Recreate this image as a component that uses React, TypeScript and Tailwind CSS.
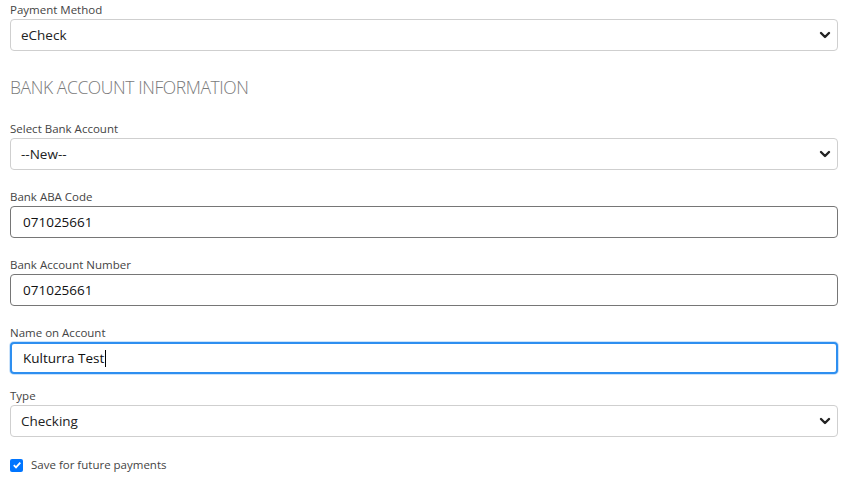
import React from "react";

const font = { fontFamily: '"Open Sans", "Segoe UI", sans-serif' };

function Chevron() {
  return (
    <svg width="12" height="8" viewBox="0 0 12 8" className="shrink-0">
      <path d="M2 2 L6 6 L10 2" stroke="#222" strokeWidth="2.4" fill="none" strokeLinecap="round" strokeLinejoin="round" />
    </svg>
  );
}

function SelectBox({ value }: { value: string }) {
  return (
    <div className="h-[32px] w-full rounded-[4px] border border-[#cfcfcf] bg-white flex items-center justify-between pl-[10px] pr-[6px] text-[13.5px] text-[#222]">
      <span>{value}</span>
      <Chevron />
    </div>
  );
}

function InputBox({ value, focused }: { value: string; focused?: boolean }) {
  return (
    <div
      className={
        focused
          ? "h-[32px] w-full rounded-[4px] border-2 border-[#2e8ff0] shadow-[0_0_0_1px_rgba(46,143,240,0.25)] bg-white flex items-center pl-[11px] text-[13.5px] text-[#111]"
          : "h-[32px] w-full rounded-[4px] border border-[#767676] bg-white flex items-center pl-[12px] text-[13.5px] text-[#111]"
      }
    >
      {value}
      {focused && <span className="w-px h-[17px] bg-black ml-px" />}
    </div>
  );
}

function Field({ label, children }: { label: string; children: React.ReactNode }) {
  return (
    <div className="flex flex-col gap-[1px]">
      <div className="pt-[2px] text-[11.5px] leading-[16px] text-[#444]">{label}</div>
      {children}
    </div>
  );
}

export default function App() {
  return (
    <div className="w-[848px] h-[502px] bg-white px-[10px] flex flex-col" style={font}>
      <Field label="Payment Method">
        <SelectBox value="eCheck" />
      </Field>
      <div className="mt-[24px] text-[17.5px] leading-[24px] font-light text-[#7a7a7a] tracking-[-0.4px]">
        BANK ACCOUNT INFORMATION
      </div>
      <div className="mt-[20px] flex flex-col gap-[17px]">
        <Field label="Select Bank Account">
          <SelectBox value="--New--" />
        </Field>
        <Field label="Bank ABA Code">
          <InputBox value="071025661" />
        </Field>
        <Field label="Bank Account Number">
          <InputBox value="071025661" />
        </Field>
        <Field label="Name on Account">
          <InputBox value="Kulturra Test" focused />
        </Field>
      </div>
      <div className="mt-[12px]">
        <Field label="Type">
          <SelectBox value="Checking" />
        </Field>
      </div>
      <label className="mt-[20px] flex items-center gap-[8px]">
        <span className="w-[13px] h-[13px] rounded-[2px] bg-[#0075ff] flex items-center justify-center">
          <svg width="10" height="10" viewBox="0 0 10 10">
            <path d="M1.8 5.2 L4 7.4 L8.3 2.6" stroke="white" strokeWidth="1.8" fill="none" />
          </svg>
        </span>
        <span className="text-[11.5px] leading-[16px] text-[#444]">Save for future payments</span>
      </label>
    </div>
  );
}
